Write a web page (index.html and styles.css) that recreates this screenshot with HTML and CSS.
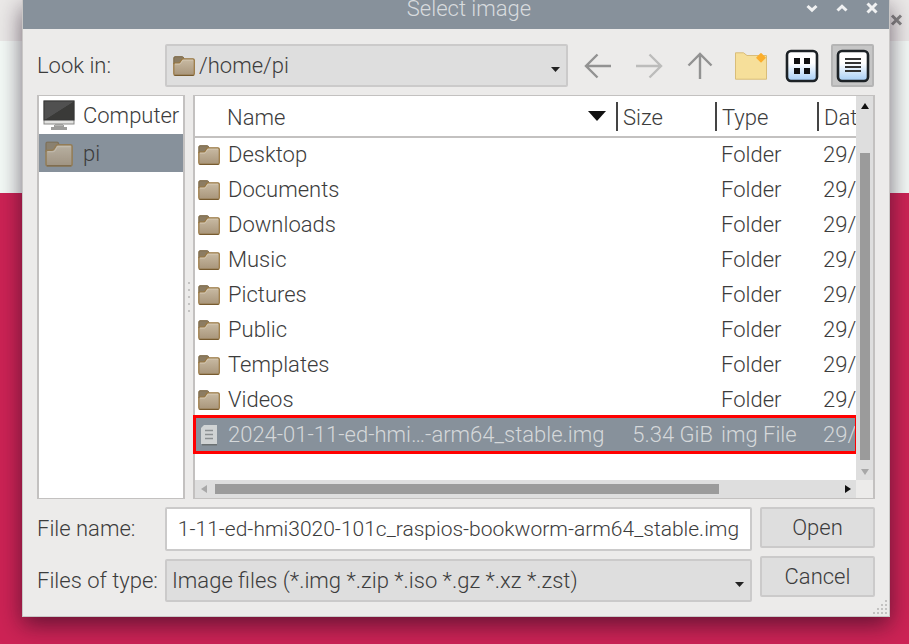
FILE: index.html
```html
<!DOCTYPE html>
<html lang="en">
<head>
<meta charset="utf-8">
<title>Select image</title>
<link rel="stylesheet" href="styles.css">
</head>
<body>
<svg class="defs" width="0" height="0" aria-hidden="true">
  <defs>
    <linearGradient id="tan" x1="0" y1="0" x2="0" y2="1"><stop offset="0" stop-color="#c9bba4"/><stop offset="1" stop-color="#a8957a"/></linearGradient>
    <linearGradient id="glow" x1="0" y1="0" x2="0" y2="1"><stop offset="0.4" stop-color="#ffffff"/><stop offset="1" stop-color="#a5cdf5"/></linearGradient>
    <linearGradient id="screen" x1="0" y1="0" x2="1" y2="1"><stop offset="0.5" stop-color="#505050"/><stop offset="0.52" stop-color="#3a3a38"/></linearGradient>
    <symbol id="folder" viewBox="0 0 22 20">
      <path d="M.8 8V2Q.8.7 2 .7H9.500Q10.600.7 10.800 2.800L6 8Z" fill="#8c7c62" stroke="#7b6642"/>
      <path d="M.8 8.200Q.8 7 2 7H5.500Q6.500 7 7.200 6L8.600 3.700Q9.200 2.800 10.200 2.800H20Q21.300 2.800 21.300 4V17.800Q21.300 19.400 19.800 19.400H2.300Q.8 19.400.8 17.800Z" fill="url(#tan)" stroke="#98763f" stroke-width="1.200"/>
      <path d="M1.500 19.400H20.600" stroke="#74592f"/>
      <path d="M2 8.200H6.500Q7.500 8 8.200 6.800L9.700 4.200H20" fill="none" stroke="#d6c9b3" stroke-width=".8"/>
    </symbol>
  </defs>
</svg>
<div class="backdrop" aria-hidden="true">
  <div class="backdrop-bar"><svg width="13" height="12" viewBox="0 0 13 12"><path d="M2 1.500 11 10.500M11 1.500 2 10.500" stroke="#858585" stroke-width="3"/></svg></div>
  <div class="backdrop-light"></div>
</div>

<main class="dialog">
  <header class="titlebar">
    <h1>Select image</h1>
    <div class="window-buttons">
      <button aria-label="Minimize"><svg width="12" height="12" viewBox="0 0 12 12"><path d="M1.500 4 6 8.200 10.500 4"/></svg></button>
      <button aria-label="Maximize"><svg width="12" height="12" viewBox="0 0 12 12"><path d="M1.500 8.500 6 4.200 10.500 8.500"/></svg></button>
      <button aria-label="Close"><svg width="12" height="12" viewBox="0 0 12 12"><path d="M1.500 1.500 10.500 10.500M10.500 1.500 1.500 10.500"/></svg></button>
    </div>
  </header>

  <div class="content">
    <div class="toolbar">
      <label for="look">Look in:</label>
      <div class="combo with-icon">
        <svg class="combo-icon" width="22" height="20"><use href="#folder"/></svg>
        <select id="look"><option>/home/pi</option></select>
        <svg class="combo-arrow" width="9" height="5" viewBox="0 0 9 5"><path d="M0 0H9L4.500 5Z"/></svg>
      </div>
      <div class="tools">
        <button aria-label="Back"><svg width="28" height="28" viewBox="0 0 28 28"><path d="M27 14H2M13.500 2.500 2 14 13.500 25.500" fill="none" stroke="#929292" stroke-width="2.400"/></svg></button>
        <button aria-label="Forward"><svg width="28" height="28" viewBox="0 0 28 28"><path d="M1 14H26M14.500 2.500 26 14 14.500 25.500" fill="none" stroke="#bcbcbb" stroke-width="2.400"/></svg></button>
        <button aria-label="Parent directory"><svg width="28" height="28" viewBox="0 0 28 28"><path d="M14 27V2M2.500 13.500 14 2 25.500 13.500" fill="none" stroke="#929292" stroke-width="2.400"/></svg></button>
        <button aria-label="Create new folder"><svg width="34" height="30" viewBox="0 0 34 30"><path d="M1.500 1.800H9.500L13 4.500H32.500V28.200H1.500Z" fill="#f6df9a" stroke="#d9bd79"/><path d="M27 2.800 31 6.800 27 10.800 23 6.800Z" fill="#fbae2d" stroke="#fbae2d" stroke-width="1.500" stroke-linejoin="round"/></svg></button>
        <button aria-label="List view"><svg width="34" height="34" viewBox="0 0 34 34"><rect x="2" y="2" width="30" height="30" rx="4" fill="url(#glow)" stroke="#1d2226" stroke-width="2.600"/><path d="M9 9h6v6H9zM19 9h6v6h-6zM9 19h6v6H9zM19 19h6v6h-6z" fill="#111"/></svg></button>
        <button class="pressed" aria-label="Detail view"><svg width="34" height="34" viewBox="0 0 34 34"><rect x="2" y="2" width="30" height="30" rx="4" fill="url(#glow)" stroke="#1d2226" stroke-width="2.600"/><path d="M9 10H25M9 14H25M9 18H25M9 22H25" stroke="#333" stroke-width="2"/></svg></button>
      </div>
    </div>

    <div class="panes">
      <nav class="places">
        <a href="#computer"><svg width="32" height="32" viewBox="0 0 32 32"><path d="M11 25H21V27H24V30H8V27H11Z" fill="#9d9d9b"/><path d="M12 23H20V26H12Z" fill="#b5b5b3"/><rect x="1" y="1" width="30" height="23" fill="#e2e2e0" stroke="#898987"/><rect x="1" y="1" width="30" height="19" fill="url(#screen)" stroke="#343434"/></svg>Computer</a>
        <a href="#pi" class="selected"><svg width="32" height="26" viewBox="0 0 32 26"><svg x="2" width="28" height="26" viewBox="0 0 22 20" opacity=".75"><use href="#folder"/></svg></svg>pi</a>
      </nav>
      <div class="splitter"><i></i><i></i><i></i><i></i><i></i></div>
      <div class="files">
        <div class="view">
          <table>
            <colgroup><col><col class="c-size"><col class="c-type"><col class="c-date"></colgroup>
            <thead><tr>
              <th><div class="name-head">Name<svg width="18" height="10" viewBox="0 0 18 10"><path d="M0 0H18L9 10Z"/></svg></div></th>
              <th>Size</th><th>Type</th><th>Dat</th>
            </tr></thead>
            <tbody>
              <tr><td><div class="file"><svg width="22" height="20"><use href="#folder"/></svg>Desktop</div></td><td></td><td>Folder</td><td>29/</td></tr>
              <tr><td><div class="file"><svg width="22" height="20"><use href="#folder"/></svg>Documents</div></td><td></td><td>Folder</td><td>29/</td></tr>
              <tr><td><div class="file"><svg width="22" height="20"><use href="#folder"/></svg>Downloads</div></td><td></td><td>Folder</td><td>29/</td></tr>
              <tr><td><div class="file"><svg width="22" height="20"><use href="#folder"/></svg>Music</div></td><td></td><td>Folder</td><td>29/</td></tr>
              <tr><td><div class="file"><svg width="22" height="20"><use href="#folder"/></svg>Pictures</div></td><td></td><td>Folder</td><td>29/</td></tr>
              <tr><td><div class="file"><svg width="22" height="20"><use href="#folder"/></svg>Public</div></td><td></td><td>Folder</td><td>29/</td></tr>
              <tr><td><div class="file"><svg width="22" height="20"><use href="#folder"/></svg>Templates</div></td><td></td><td>Folder</td><td>29/</td></tr>
              <tr><td><div class="file"><svg width="22" height="20"><use href="#folder"/></svg>Videos</div></td><td></td><td>Folder</td><td>29/</td></tr>
              <tr class="selected"><td><div class="file"><svg width="22" height="22" viewBox="0 0 22 22"><path d="M4 20H19V21.500H4Z" fill="#6a7072"/><path d="M6 1H19V20H3V4Z" fill="#d0d3d4"/><path d="M7 6.500H15M7 10.500H15M7 14.500H15" stroke="#8b9092" stroke-width="1.500"/></svg>2024-01-11-ed-hmi…-arm64_stable.img</div></td><td>5.34 GiB</td><td>img File</td><td>29/</td></tr>
            </tbody>
          </table>
        </div>
        <div class="vscroll"><svg width="8" height="6" viewBox="0 0 8 6"><path d="M0 6 4 0 8 6Z"/></svg><div class="thumb"></div><svg class="off" width="8" height="6" viewBox="0 0 8 6"><path d="M0 0H8L4 6Z"/></svg></div>
        <div class="hscroll"><svg class="off" width="6" height="8" viewBox="0 0 6 8"><path d="M6 0V8L0 4Z"/></svg><div class="track"><div class="thumb"></div></div><svg width="6" height="8" viewBox="0 0 6 8"><path d="M0 0V8L6 4Z"/></svg></div>
      </div>
    </div>

    <div class="form">
      <div class="fields">
        <label for="fname">File name:</label>
        <input id="fname" type="text" value="1-11-ed-hmi3020-101c_raspios-bookworm-arm64_stable.img">
        <label for="ftype">Files of type:</label>
        <div class="combo">
          <select id="ftype"><option>Image files (*.img *.zip *.iso *.gz *.xz *.zst)</option></select>
          <svg class="combo-arrow" width="9" height="5" viewBox="0 0 9 5"><path d="M0 0H9L4.500 5Z"/></svg>
        </div>
      </div>
      <div class="actions"><button>Open</button><button>Cancel</button></div>
    </div>
  </div>
  <svg class="grip" width="16" height="16" viewBox="0 0 16 16" aria-hidden="true"><path d="M13 1h2v2h-2zM9 5h2v2H9zM13 5h2v2h-2zM5 9h2v2H5zM9 9h2v2H9zM13 9h2v2h-2zM1 13h2v2H1zM5 13h2v2H5zM9 13h2v2H9zM13 13h2v2h-2z" fill="#c3c2c1"/></svg>
</main>
</body>
</html>
```
FILE: styles.css
```css
* { box-sizing: border-box; }
body {
  margin: 0;
  min-height: 100vh;
  overflow: hidden;
  background: #cd2355;
  color: #3c3c3c;
  font: 300 22px/28px Roboto, sans-serif;
}
svg { display: block; flex: none; }
button, input, select { font: inherit; color: inherit; }
button { padding: 0; border: 0; background: none; }
.defs { position: absolute; }

.backdrop { position: absolute; inset: 0; }
.backdrop-bar {
  display: flex;
  justify-content: flex-end;
  padding: 14px 6px 0 0;
  height: 41px;
  background: #ebe9e8;
}
.backdrop-light { height: 152px; background: #f4faf7; }

.dialog {
  position: relative;
  margin: 0 19px 28px 22px;
  border: 1px solid #c9c7c6;
  border-top: 0;
  background: #ecebea;
  box-shadow: 0 8px 22px rgba(30, 10, 30, 0.6);
}
.titlebar {
  display: grid;
  grid-template-columns: 118px 1fr 92px;
  align-items: start;
  height: 29px;
  background: #87919b;
  color: #d8dbde;
}
.titlebar h1 {
  grid-column: 2;
  margin: 0;
  font: inherit;
  line-height: 18px;
  text-align: center;
}
.window-buttons { display: flex; gap: 18px; justify-content: flex-end; padding: 2px 11px 0 0; }
.window-buttons path { fill: none; stroke: #f0f1f2; stroke-width: 3; }

.content { display: grid; gap: 8px; padding: 15px 14px 14px; }
.toolbar { display: grid; grid-template-columns: 128px 1fr auto; align-items: center; }
.tools { display: flex; gap: 8px; margin: 0 1px 0 8px; }
.tools button {
  display: grid;
  place-items: center;
  width: 43px;
  height: 43px;
}
.tools .pressed { background: #c6c6c6; border: 2px solid #b5b5b5; border-radius: 2px; }

.combo { position: relative; }
.combo select {
  display: block;
  appearance: none;
  width: 100%;
  height: 43px;
  padding: 0 24px 0 5px;
  border: 2px solid #cbcaca;
  border-radius: 2px;
  background: #dedede;
}
.with-icon select { padding-left: 32px; }
.combo-icon { position: absolute; left: 8px; top: 12px; }
.combo-arrow { position: absolute; right: 8px; top: 23px; fill: #222; }

.panes { display: grid; grid-template-columns: 148px 8px 1fr; height: 404px; }
.places { border: 2px solid #c3c1c0; border-width: 1px 2px; background: #fff; }
.places a {
  display: flex;
  align-items: center;
  gap: 8px;
  height: 38px;
  padding: 2px 0 0 4px;
  color: inherit;
  text-decoration: none;
}
.places .selected { background: #87919b; }
.splitter {
  display: flex;
  flex-direction: column;
  align-items: center;
  justify-content: center;
  gap: 5px;
}
.splitter i { width: 2px; height: 2px; background: #c3c2c1; }

.files {
  display: grid;
  grid-template: 1fr 18px / 1fr 17px;
  border: 2px solid #c3c1c0;
  border-width: 1px 2px;
}
.view { background: #fff; min-width: 0; }
table { width: 100%; table-layout: fixed; border-collapse: collapse; }
.c-size { width: 99px; }
.c-type { width: 102px; }
.c-date { width: 39px; }
th, td { padding: 0; font-weight: 300; text-align: left; white-space: nowrap; }
th {
  height: 41px;
  border-bottom: 2px solid #c3c1c0;
  padding: 3px 0 0 7px;
  background: linear-gradient(#444, #444) 0 6px / 2px 29px no-repeat;
}
th:first-child { padding-left: 32px; background: none; }
.name-head { display: flex; align-items: center; justify-content: space-between; padding-right: 10px; }
.name-head svg { fill: #111; margin-bottom: 4px; }
td { height: 35px; padding-left: 6px; }
td:first-child { padding-left: 3px; }
td:nth-child(2) { padding: 0 2px 0 0; text-align: right; }
.file { display: flex; align-items: center; gap: 8px; }
tr.selected { background: #87919b; color: #d5d8da; outline: 3px solid #f00; outline-offset: -1px; }

.vscroll, .hscroll { display: flex; align-items: center; background: #dedede; fill: #111; }
.vscroll { flex-direction: column; padding: 7px 0 5px; }
.vscroll .thumb { flex: 1; width: 10px; margin: 44px 0 9px; background: #9b9b9b; }
.hscroll { padding: 0 5px 0 6px; gap: 8px; }
.track { flex: 1; }
.hscroll .thumb { width: 81%; height: 10px; background: #9b9b9b; }
.off { fill: #a8a8a8; }

.form { display: grid; grid-template-columns: 1fr 115px; gap: 8px; }
.fields { display: grid; grid-template-columns: 128px 1fr; row-gap: 8px; align-items: center; }
.fields label { white-space: nowrap; }
.fields input {
  min-width: 0;
  height: 44px;
  padding: 0 2px;
  border: 2px solid #cbcaca;
  border-radius: 2px;
  background: #fff;
  font-size: 21px;
  text-align: center;
}
.actions { display: grid; gap: 8px; align-content: start; }
.actions button {
  height: 41px;
  border: 2px solid #cbcaca;
  border-radius: 2px;
  background: #dedede;
}
.grip { position: absolute; right: 1px; bottom: 1px; }
```
